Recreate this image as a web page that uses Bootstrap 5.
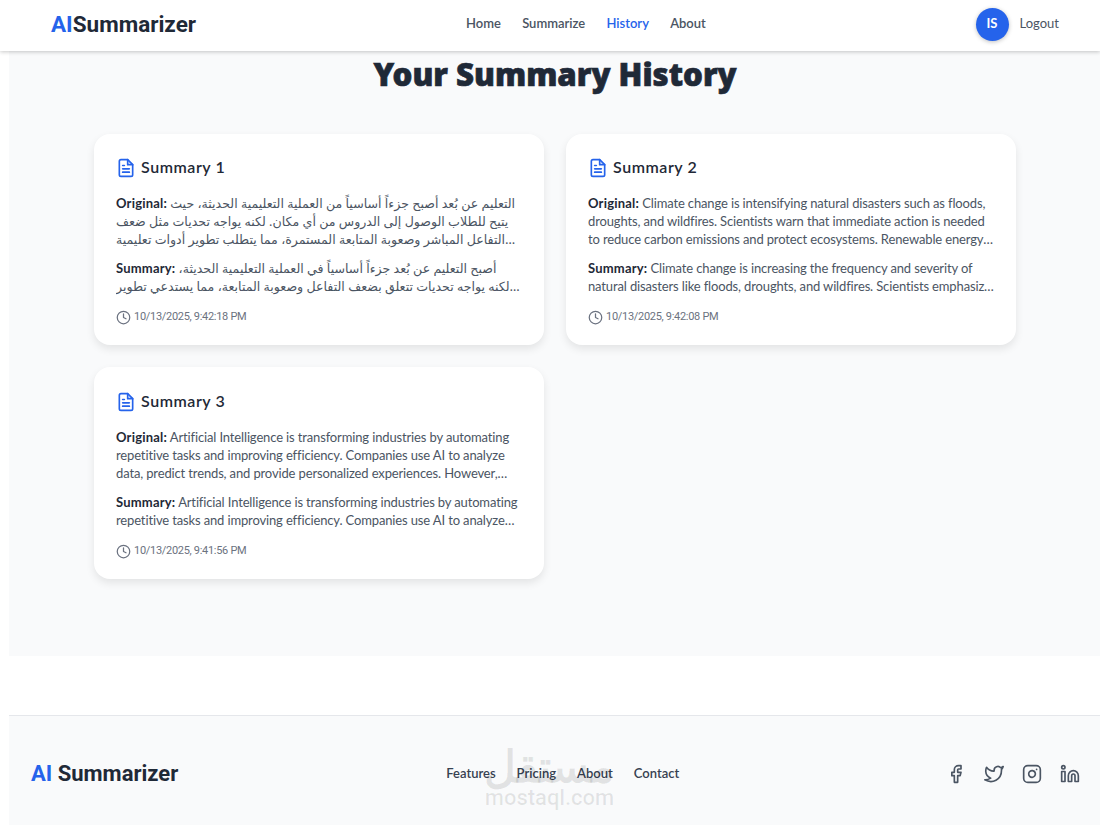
<!DOCTYPE html>
<html lang="en">
<head>
  <meta charset="UTF-8">
  <title>AI Summarizer - History</title>
  <link href="https://cdn.jsdelivr.net/npm/bootstrap@5.3.3/dist/css/bootstrap.min.css" rel="stylesheet">
  <style>
    body { background: #fff; font-family: Lato, Roboto, sans-serif; color: #1f2937; overflow: hidden; }
    .top-bar { height: 51px; padding: 0 41px 3px 51px; background: #fff; box-shadow: 0 1px 4px rgba(0,0,0,.22); position: relative; z-index: 2; }
    .brand-main { font-family: Roboto, sans-serif; font-size: 22.5px; font-weight: 700; color: #1f2937; line-height: 1; }
    .accent { color: #2563eb; }
    .top-links { gap: 21.2px; margin-left: 270px; }
    .top-links .nav-link { padding: 0; font-size: 13px; font-weight: 600; color: #4b5563; }
    .top-links .nav-link.active { color: #2563eb; }
    .user-dot { width: 33px; height: 33px; background: #2563eb; color: #fff; font-size: 13px; font-weight: 700; box-shadow: 0 1px 4px rgba(0,0,0,.25); }
    .logout-link { font-size: 13px; color: #4b5563; text-decoration: none; margin-left: 3px; }
    .history-area { margin-left: 9px; height: 605px; background: #f9fafb; padding: 0 84px 0 85px; }
    .history-title { font-family: "Noto Sans", sans-serif; font-size: 31.2px; font-weight: 900; -webkit-text-stroke: .7px #1f2937; color: #1f2937; text-align: center; margin: 0; padding-top: 2px; height: 83px; line-height: 42px; }
    .history-grid { display: grid; grid-template-columns: 450px 450px; gap: 22px; }
    .summary-card { height: 211px; border: 0; border-radius: 16px; padding: 22px; background: #fff; box-shadow: 0 4px 8px rgba(0,0,0,.09); }
    .summary-card:nth-child(3) { height: 212px; padding-top: 23px; }
    .summary-head { height: 24px; gap: 5px; margin-bottom: 14px; font-size: 16px; font-weight: 600; letter-spacing: .55px; color: #1f2937; flex-shrink: 0; }
    .summary-head svg { color: #2563eb; }
    .summary-head span { margin-top: -2px; }
    .clamp-text { flex-shrink: 0; font-size: 13px; letter-spacing: -.14px; line-height: 18px; color: #4b5563; margin: 0 0 11px; display: -webkit-box; -webkit-box-orient: vertical; overflow: hidden; }
    .clamp-text b { color: #1f2937; font-weight: 700; letter-spacing: .2px; }
    .arabic-run { font-family: "Noto Sans", "DejaVu Sans", sans-serif; font-size: 12.6px; letter-spacing: 0; line-height: 1; }
    .clamp-3 { -webkit-line-clamp: 3; }
    .clamp-2 { -webkit-line-clamp: 2; }
    .stamp { font-family: Roboto, sans-serif; font-size: 11px; letter-spacing: -.3px; color: #6b7280; gap: 3px; margin-top: 3px; }
    .foot-area { margin: 59px 0 0 9px; height: 110px; border-top: 1px solid #e5e7eb; background: #f9fafb; padding: 6px 20px 0 22px; position: relative; }
    .foot-brand { font-family: Roboto, sans-serif; font-size: 22px; font-weight: 700; color: #1f2937; }
    .foot-links { gap: 21px; margin-left: 268px; }
    .foot-links a { font-size: 13px; font-weight: 600; color: #374151; text-decoration: none; }
    .foot-icons { gap: 18px; color: #4b5563; }
    .stamp-mark { position: absolute; left: 474px; top: 27px; width: 133px; color: rgba(0,0,0,.09); pointer-events: none; line-height: 1; font-family: "Noto Sans", sans-serif; }
    .stamp-mark-ar { font-size: 44px; font-weight: 700; height: 44px; white-space: nowrap; }
    .stamp-mark-en { font-family: Roboto, sans-serif; font-size: 22px; font-weight: 500; }
  </style>
</head>
<body>
  <nav class="top-bar d-flex align-items-center">
    <a class="brand-main text-decoration-none" href="#"><span class="accent">AI</span>Summarizer</a>
    <div class="nav top-links">
      <a class="nav-link" href="#">Home</a>
      <a class="nav-link" href="#">Summarize</a>
      <a class="nav-link active" href="#">History</a>
      <a class="nav-link" href="#">About</a>
    </div>
    <div class="d-flex align-items-center gap-2 ms-auto">
      <span class="user-dot rounded-circle d-flex align-items-center justify-content-center">IS</span>
      <a class="logout-link" href="#">Logout</a>
    </div>
  </nav>

  <main class="history-area">
    <h1 class="history-title">Your Summary History</h1>
    <div class="history-grid">
      <div class="card summary-card">
        <div class="summary-head d-flex align-items-center">
          <svg width="20" height="20" viewBox="0 0 24 24" fill="none" stroke="currentColor" stroke-width="2" stroke-linecap="round" stroke-linejoin="round"><path d="M14 2H6a2 2 0 0 0-2 2v16a2 2 0 0 0 2 2h12a2 2 0 0 0 2-2V8z"/><polyline points="14 2 14 8 20 8"/><line x1="16" y1="13" x2="8" y2="13"/><line x1="16" y1="17" x2="8" y2="17"/><polyline points="10 9 9 9 8 9"/></svg>
          <span>Summary 1</span>
        </div>
        <p class="clamp-text clamp-3"><b>Original:</b> <span class="arabic-run">التعليم عن بُعد أصبح جزءاً أساسياً من العملية التعليمية الحديثة، حيث يتيح للطلاب الوصول إلى الدروس من أي مكان. لكنه يواجه تحديات مثل ضعف التفاعل المباشر وصعوبة المتابعة المستمرة، مما يتطلب تطوير أدوات تعليمية تفاعلية تساعد الطلاب على التركيز والاستمرار في التعلم بشكل فعال.</span></p>
        <p class="clamp-text clamp-2"><b>Summary:</b> <span class="arabic-run">أصبح التعليم عن بُعد جزءاً أساسياً في العملية التعليمية الحديثة،&rlm;<br>لكنه يواجه تحديات تتعلق بضعف التفاعل وصعوبة المتابعة، مما يستدعي تطوير أدوات تعليمية تفاعلية تساعد الطلاب على التركيز.</span></p>
        <div class="stamp d-flex align-items-center">
          <svg width="15" height="15" viewBox="0 0 24 24" fill="none" stroke="currentColor" stroke-width="2" stroke-linecap="round" stroke-linejoin="round"><circle cx="12" cy="12" r="10"/><polyline points="12 6 12 12 16 14"/></svg>
          <span>10/13/2025, 9:42:18 PM</span>
        </div>
      </div>
      <div class="card summary-card">
        <div class="summary-head d-flex align-items-center">
          <svg width="20" height="20" viewBox="0 0 24 24" fill="none" stroke="currentColor" stroke-width="2" stroke-linecap="round" stroke-linejoin="round"><path d="M14 2H6a2 2 0 0 0-2 2v16a2 2 0 0 0 2 2h12a2 2 0 0 0 2-2V8z"/><polyline points="14 2 14 8 20 8"/><line x1="16" y1="13" x2="8" y2="13"/><line x1="16" y1="17" x2="8" y2="17"/><polyline points="10 9 9 9 8 9"/></svg>
          <span>Summary 2</span>
        </div>
        <p class="clamp-text clamp-3"><b>Original:</b> Climate change is intensifying natural disasters such as floods, droughts, and wildfires. Scientists warn that immediate action is needed to reduce carbon emissions and protect ecosystems. Renewable energy sources and sustainable policies are essential to limit further damage to the planet.</p>
        <p class="clamp-text clamp-2"><b>Summary:</b> Climate change is increasing the frequency and severity of natural disasters like floods, droughts, and wildfires. Scientists emphasize the urgent need to cut carbon emissions and protect ecosystems.</p>
        <div class="stamp d-flex align-items-center">
          <svg width="15" height="15" viewBox="0 0 24 24" fill="none" stroke="currentColor" stroke-width="2" stroke-linecap="round" stroke-linejoin="round"><circle cx="12" cy="12" r="10"/><polyline points="12 6 12 12 16 14"/></svg>
          <span>10/13/2025, 9:42:08 PM</span>
        </div>
      </div>
      <div class="card summary-card">
        <div class="summary-head d-flex align-items-center">
          <svg width="20" height="20" viewBox="0 0 24 24" fill="none" stroke="currentColor" stroke-width="2" stroke-linecap="round" stroke-linejoin="round"><path d="M14 2H6a2 2 0 0 0-2 2v16a2 2 0 0 0 2 2h12a2 2 0 0 0 2-2V8z"/><polyline points="14 2 14 8 20 8"/><line x1="16" y1="13" x2="8" y2="13"/><line x1="16" y1="17" x2="8" y2="17"/><polyline points="10 9 9 9 8 9"/></svg>
          <span>Summary 3</span>
        </div>
        <p class="clamp-text clamp-3"><b>Original:</b> Artificial Intelligence is transforming industries by automating repetitive tasks and improving efficiency. Companies use AI to analyze data, predict trends, and provide personalized experiences. However, concerns about privacy and job displacement remain important challenges for society.</p>
        <p class="clamp-text clamp-2"><b>Summary:</b> Artificial Intelligence is transforming industries by automating repetitive tasks and improving efficiency. Companies use AI to analyze data, predict trends, and personalize experiences for customers.</p>
        <div class="stamp d-flex align-items-center">
          <svg width="15" height="15" viewBox="0 0 24 24" fill="none" stroke="currentColor" stroke-width="2" stroke-linecap="round" stroke-linejoin="round"><circle cx="12" cy="12" r="10"/><polyline points="12 6 12 12 16 14"/></svg>
          <span>10/13/2025, 9:41:56 PM</span>
        </div>
      </div>
    </div>
  </main>

  <footer class="foot-area d-flex align-items-center">
    <a class="foot-brand text-decoration-none" href="#"><span class="accent">AI</span> Summarizer</a>
    <div class="d-flex foot-links">
      <a href="#">Features</a>
      <a href="#">Pricing</a>
      <a href="#">About</a>
      <a href="#">Contact</a>
    </div>
    <div class="d-flex foot-icons ms-auto">
      <svg width="20" height="20" viewBox="0 0 24 24" fill="none" stroke="currentColor" stroke-width="2" stroke-linecap="round" stroke-linejoin="round"><path d="M18 2h-3a5 5 0 0 0-5 5v3H7v4h3v8h4v-8h3l1-4h-4V7a1 1 0 0 1 1-1h3z"/></svg>
      <svg width="20" height="20" viewBox="0 0 24 24" fill="none" stroke="currentColor" stroke-width="2" stroke-linecap="round" stroke-linejoin="round"><path d="M23 3a10.9 10.9 0 0 1-3 1.53 4.48 4.48 0 0 0-7.86 3v1A10.66 10.66 0 0 1 3 4s-4 9 5 13a11.64 11.64 0 0 1-7 2c9 5 20 0 20-11.5a4.5 4.5 0 0 0-.08-.83A7.72 7.72 0 0 0 23 3z"/></svg>
      <svg width="20" height="20" viewBox="0 0 24 24" fill="none" stroke="currentColor" stroke-width="2" stroke-linecap="round" stroke-linejoin="round"><rect x="2" y="2" width="20" height="20" rx="5" ry="5"/><path d="M16 11.37A4 4 0 1 1 12.63 8 4 4 0 0 1 16 11.37z"/><line x1="17.5" y1="6.5" x2="17.51" y2="6.5"/></svg>
      <svg width="20" height="20" viewBox="0 0 24 24" fill="none" stroke="currentColor" stroke-width="2" stroke-linecap="round" stroke-linejoin="round"><path d="M16 8a6 6 0 0 1 6 6v7h-4v-7a2 2 0 0 0-2-2 2 2 0 0 0-2 2v7h-4v-7a6 6 0 0 1 6-6z"/><rect x="2" y="9" width="4" height="12"/><circle cx="4" cy="4" r="2"/></svg>
    </div>
    <div class="stamp-mark d-flex flex-column align-items-center">
      <div class="stamp-mark-ar">مستقل</div>
      <div class="stamp-mark-en">mostaql.com</div>
    </div>
  </footer>

  <script src="https://cdn.jsdelivr.net/npm/bootstrap@5.3.3/dist/js/bootstrap.bundle.min.js"></script>
</body>
</html>
